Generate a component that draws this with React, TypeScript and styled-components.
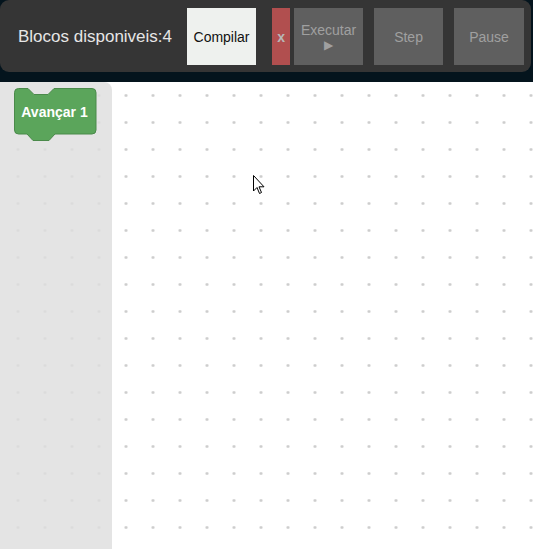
import React from "react";
import styled, { createGlobalStyle } from "styled-components";

const GlobalStyle = createGlobalStyle`
  html, body { margin: 0; padding: 0; }
  body {
    background: #04141d;
    font-family: "Liberation Sans", Arial, sans-serif;
    overflow: hidden;
  }
`;

const Page = styled.div`
  display: flex;
  flex-direction: column;
  width: 533px;
  height: 549px;
  position: relative;
`;

const TopBar = styled.div`
  display: flex;
  align-items: center;
  width: 531px;
  height: 72px;
  box-sizing: border-box;
  padding: 8px 7px 7px 18px;
  background: #353535;
  border-radius: 9px;
`;

const Label = styled.span`
  color: #e6e6e6;
  font-size: 17px;
  margin-right: 15px;
  white-space: nowrap;
`;

type Variant = "light" | "danger" | "dark";

const Button = styled.button<{ $variant: Variant; $w: number; $ml: number }>`
  display: flex;
  flex-direction: column;
  align-items: center;
  justify-content: center;
  flex-shrink: 0;
  width: ${(p) => p.$w}px;
  height: 57px;
  margin-left: ${(p) => p.$ml}px;
  padding: 0;
  border: none;
  border-radius: 0;
  font-family: "Liberation Sans", Arial, sans-serif;
  font-size: 14px;
  line-height: 16px;
  background: ${(p) =>
    p.$variant === "light" ? "#eef1ee" : p.$variant === "danger" ? "#b14f4f" : "#5f5f5f"};
  color: ${(p) => (p.$variant === "light" ? "#111" : p.$variant === "danger" ? "#b8b8b8" : "#a0a0a0")};
  font-weight: ${(p) => (p.$variant === "danger" ? "bold" : "normal")};
`;

const Arrow = styled.span`
  font-size: 12px;
  line-height: 14px;
`;

const Workspace = styled.div`
  display: flex;
  flex: 1;
  margin-top: 10px;
  background-color: #ffffff;
  background-image: radial-gradient(circle, #cdcdcd 1.1px, transparent 1.7px);
  background-size: 27px 27px;
  background-position: 4.5px 0px;
`;

const Flyout = styled.div`
  width: 112px;
  box-sizing: border-box;
  padding: 6px 0 0 14px;
  background: rgba(222, 222, 222, 0.82);
  border-top-right-radius: 8px;
`;

const BlockSvg = styled.svg`
  display: block;
  overflow: visible;
`;

const Cursor = styled.svg`
  position: absolute;
  left: 253px;
  top: 175px;
`;

function Block({ label }: { label: string }) {
  return (
    <BlockSvg width={83} height={54} viewBox="0 0 83 54">
      <path
        d="M4.5,0.5 L14,0.5 L20,6.5 L34,6.5 L40,0.5 L78,0.5 Q82,0.5 82,4.5 L82,42 Q82,46 78,46 L41,46 L35,52.5 L19,52.5 L13,46 L4.5,46 Q0.5,46 0.5,42 L0.5,4.5 Q0.5,0.5 4.5,0.5 Z"
        fill="#5ba55b"
        stroke="#4b8a4b"
        strokeWidth={1}
      />
      <text
        x={40.5}
        y={28.5}
        textAnchor="middle"
        fill="#ffffff"
        fontFamily="'Liberation Sans', Arial, sans-serif"
        fontWeight="bold"
        fontSize="14"
      >
        {label}
      </text>
    </BlockSvg>
  );
}

export default function App() {
  return (
    <>
      <GlobalStyle />
      <Page>
        <TopBar>
          <Label>Blocos disponiveis:4</Label>
          <Button $variant="light" $w={69} $ml={0}>Compilar</Button>
          <Button $variant="danger" $w={18} $ml={16}>x</Button>
          <Button $variant="dark" $w={69} $ml={4}>
            <span>Executar</span>
            <Arrow>▶</Arrow>
          </Button>
          <Button $variant="dark" $w={69} $ml={11}>Step</Button>
          <Button $variant="dark" $w={70} $ml={11}>Pause</Button>
        </TopBar>
        <Workspace>
          <Flyout>
            <Block label="Avançar 1" />
          </Flyout>
        </Workspace>
        <Cursor width="12" height="20" viewBox="0 0 12 20">
          <path
            d="M0.5,0.5 L0.5,16 L4,12.5 L6.5,18.5 L8.5,17.5 L6,11.8 L11,11.8 Z"
            fill="#ffffff"
            stroke="#000000"
            strokeWidth="1"
            strokeLinejoin="miter"
          />
        </Cursor>
      </Page>
    </>
  );
}
